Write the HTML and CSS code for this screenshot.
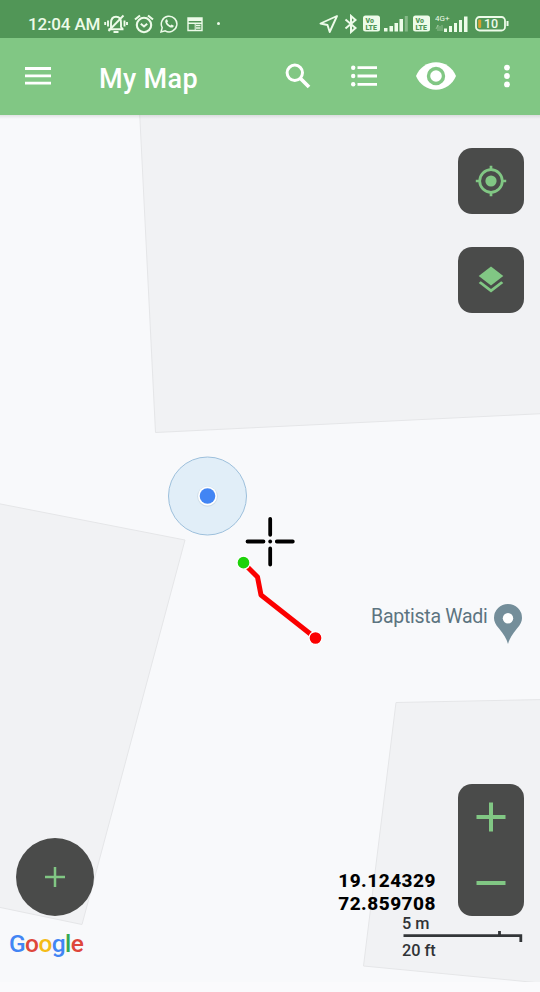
FILE: index.html
```html
<!DOCTYPE html>
<html lang="en">
<head>
<meta charset="utf-8">
<title>My Map</title>
<link rel="stylesheet" href="styles.css">
</head>
<body>
<div class="phone">
  <div class="status">
    <span class="clock">12:04 AM</span>
    <div class="status-left">
      <svg width="24" height="20" viewBox="0 0 24 20" fill="none" stroke="currentColor" stroke-width="1.900"><path d="M4.500 15.300h15M7 15V9c0-4 2-6.200 5-6.200s5 2.200 5 6.200v4l2 2.300M9.500 18h5M4 6.500v6M1.200 8v3M20.500 6.500v6M23 8v3"/><path d="M4.500 17 19.500 1.500"/></svg>
      <svg width="20" height="20" viewBox="0 0 20 20" fill="none" stroke="currentColor" stroke-width="2.100"><circle cx="10" cy="11" r="7.200"/><path d="m6.800 9.800 3.200 2.700 3.200-2.700M1 5.500 6 1.500M19 5.500l-5-4"/></svg>
      <svg width="18" height="20" viewBox="0 0 18 20" fill="none" stroke="currentColor" stroke-width="1.500"><path d="m1 18 1.200-4.300A7.800 7.800 0 1 1 5.200 16.800Z"/><path d="M5.600 6c.8-1 1.500-.9 1.900.2l.5 1.300-.8 1.100c.8 1.500 1.800 2.400 3.300 3l1-1.100 2 .9c.6.400.1 1.300-.5 1.800-1.200.9-3.200.3-5.400-1.500C5.400 9.700 4.700 7.300 5.600 6Z" fill="currentColor" stroke="none"/></svg>
      <svg class="news" width="16" height="16" viewBox="0 0 16 16" fill="none" stroke="currentColor" stroke-width="1.400"><path d="M1 2h14v12.500H1z"/><path d="M1 3.500h14" stroke-width="3"/><path d="M1 7.200h14M9 9.500h4.500M9 12h4.500" stroke-width="1.500"/><path d="M8.200 7v7.500" stroke-width="1"/></svg>
      <span class="dot"></span>
    </div>
    <div class="status-right">
      <svg class="nav" width="20" height="20" viewBox="0 0 20 20" fill="none" stroke="currentColor" stroke-width="1.900" stroke-linejoin="round"><path d="M18 2 1.500 9.500l7 1.500 2.200 7z"/></svg>
      <svg class="bt" width="14" height="20" viewBox="0 0 14 20" fill="none" stroke="currentColor" stroke-width="2"><path d="m1.500 5.500 10 8.500L7 18V2l4.500 4-10 8.500"/></svg>
      <svg class="volte" width="17" height="17" viewBox="0 0 17 17"><rect width="17" height="16" y=".5" rx="2.500" fill="currentColor"/><text x="2.500" y="7.800" class="lte">Vo</text><text x="2.500" y="14.500" class="lte">LTE</text></svg>
      <svg class="bars" width="25" height="17" viewBox="0 0 25 17" fill="currentColor"><path d="M0 13h3.500v3.500H0zM5.500 11H9v5.500H5.500zM10.500 8H14v8.500h-3.500zM15.500 4H19v12.500h-3.500z"/><path d="M20.800 1h3v15.500h-3z" opacity=".35"/></svg>
      <svg class="volte two" width="17" height="17" viewBox="0 0 17 17"><rect width="17" height="16" y=".5" rx="2.500" fill="currentColor"/><text x="2.500" y="7.800" class="lte">Vo</text><text x="2.500" y="14.500" class="lte">LTE</text></svg>
      <svg class="cell" width="34" height="19" viewBox="0 0 34 19" fill="currentColor"><text x="0" y="6.500" class="net">4G+</text><path d="m1 15 2-4v6M7 11v6M5 17v-5" fill="none" stroke="currentColor" stroke-width=".8" opacity=".5"/><path d="M9 14.500h3V18H9zM14 12h3v6h-3zM19 9h3v9h-3zM24 6h3v12h-3zM29 2.500h3.500V18H29z"/></svg>
      <svg class="battery" width="35" height="16" viewBox="0 0 35 16"><rect x="1" y="1" width="29" height="13.500" rx="3.500" fill="none" stroke="currentColor" stroke-width="1.800"/><path d="M31.500 5h2v5h-2z" fill="currentColor"/><rect x="3.200" y="3.500" width="3" height="8.500" rx="1" fill="#d9a02d"/><text x="9" y="12.200" class="charge">10</text></svg>
    </div>
  </div>
  <div class="appbar">
    <svg class="menu" width="26" height="20" viewBox="0 0 26 20"><path d="M0 2.500h26M0 9.800h26M0 17.200h26" stroke="currentColor" stroke-width="2.800"/></svg>
    <h1>My Map</h1>
    <svg class="search" width="26" height="26" viewBox="0 0 26 26" fill="none" stroke="currentColor" stroke-width="3"><circle cx="9.800" cy="9.800" r="7.700"/><path d="m15.500 15.500 8.500 8.500" stroke-width="3.700"/></svg>
    <svg class="list" width="26" height="22" viewBox="0 0 26 22" fill="currentColor"><circle cx="2.200" cy="2.700" r="2.200"/><circle cx="2.200" cy="11" r="2.200"/><circle cx="2.200" cy="19.300" r="2.200"/><path d="M6.500 1.300H26v2.800H6.500zM6.500 9.600H26v2.800H6.500zM6.500 17.900H26v2.800H6.500z"/></svg>
    <svg class="eye" width="40" height="28" viewBox="0 0 40 28"><path d="M0 14C3.500 5.500 11 .3 20 .3S36.500 5.500 40 14C36.500 22.500 29 27.700 20 27.700S3.500 22.500 0 14Z" fill="currentColor"/><circle cx="20" cy="14" r="7.500" fill="none" stroke="#81c784" stroke-width="3.400"/></svg>
    <svg class="more" width="6" height="24" viewBox="0 0 6 24" fill="currentColor"><circle cx="3" cy="3.600" r="2.900"/><circle cx="3" cy="12" r="2.900"/><circle cx="3" cy="20.400" r="2.900"/></svg>
  </div>
  <main class="map">
    <svg class="canvas" width="540" height="877" viewBox="0 115 540 877">
      <defs><linearGradient id="shade" x1="0" y1="0" x2="0" y2="1"><stop offset="0" stop-color="#000" stop-opacity=".09"/><stop offset="1" stop-color="#000" stop-opacity="0"/></linearGradient></defs>
      <g fill="#f1f2f4" stroke="#e5e6e8" stroke-width="1">
        <path d="M139.500 110 155.500 432.500 545 413.500V110z"/>
        <path d="M-2 503.500 185 540 82 924.500-2 907z"/>
        <path d="M396 702.500 545 699.500V983.500L515 980.500 363.500 966z"/>
      </g>
      <path d="M0 982h540v10H0z" fill="#fafafc"/>
      <path d="M0 115h540v4H0z" fill="url(#shade)"/>
      <circle cx="207.500" cy="496" r="39" fill="#e1eef8" stroke="#9dc0dc"/>
      <circle cx="207.500" cy="496.500" r="10.300" fill="#cfdde8"/>
      <circle cx="207.500" cy="496" r="9.500" fill="#fff"/>
      <circle cx="207.500" cy="496" r="7.800" fill="#4285f4"/>
      <path d="m243.500 563 14 14 3.500 18 54.500 43" fill="none" stroke="#fb0000" stroke-width="5" stroke-linejoin="round"/>
      <circle cx="243.500" cy="562.700" r="6.500" fill="#1ed20a" stroke="#fff" stroke-width="1.300"/>
      <circle cx="315.500" cy="638" r="6.500" fill="#fb0000" stroke="#fff" stroke-width="1.300"/>
      <g stroke="#fff" stroke-width="5.500" stroke-linecap="round"><path d="M270.200 519v16M270.200 549v15.500M247.500 541.800h16M277 541.800h16"/></g>
      <g stroke="#000" stroke-width="3.800" stroke-linecap="round"><path d="M270.200 518.800v16M270.200 548.500v16M247.500 541.500h16M276.800 541.500h16"/></g>
      <circle cx="270.200" cy="541.500" r="1.900"/>
      <path d="M508 644C506.500 638 503.500 634.500 499 628.500 495.500 624.500 494 621.500 494 618A14 14 0 0 1 522 618C522 621.500 520.500 624.500 517 628.500 512.500 634.500 509.500 638 508 644Z" fill="#748e9a"/>
      <circle cx="508" cy="618.300" r="5.200" fill="#fff"/>
      <path d="M403.500 935.700h117.300v6.300M499.500 931v5" fill="none" stroke="#333638" stroke-width="2.800"/>
    </svg>
    <span class="place">Baptista Wadi</span>
    <button class="tile locate" aria-label="Locate"><svg width="32" height="32" viewBox="0 0 32 32" fill="none" stroke="currentColor" stroke-width="2.700"><circle cx="16" cy="16" r="11.300"/><circle cx="16" cy="16" r="5.600" fill="currentColor" stroke="none"/><path d="M16 .8v4.500M16 26.700v4.500M.8 16h4.500M26.700 16h4.500"/></svg></button>
    <button class="tile layers" aria-label="Layers"><svg width="26" height="28" viewBox="0 0 26 28" fill="currentColor"><path d="M13 .5 25.300 10 13 19.500.7 10z"/><path d="m.7 16.900 2.100-1.700L13 23.100l10.200-7.900 2.100 1.700L13 26.500z"/></svg></button>
    <div class="zoom">
      <button aria-label="Zoom in"><svg width="30" height="30" viewBox="0 0 30 30"><path d="M.5 15h29M15 .5v29" stroke="currentColor" stroke-width="4"/></svg></button>
      <button aria-label="Zoom out"><svg width="30" height="30" viewBox="0 0 30 30"><path d="M.5 15h29" stroke="currentColor" stroke-width="4"/></svg></button>
    </div>
    <button class="add" aria-label="Add"><svg width="20" height="20" viewBox="0 0 20 20"><path d="M0 10h20M10 0v20" stroke="currentColor" stroke-width="2.500"/></svg></button>
    <div class="coords">19.124329<br>72.859708</div>
    <span class="scale meters">5 m</span>
    <span class="scale feet">20 ft</span>
    <div class="google"><span class="b">G</span><span class="r">o</span><span class="y">o</span><span class="b">g</span><span class="g">l</span><span class="r">e</span></div>
  </main>
</div>
</body>
</html>
```
FILE: styles.css
```css
* { box-sizing: border-box; }
body { margin: 0; font-family: Roboto, "Liberation Sans", sans-serif; }
svg { display: block; flex: none; }
button { border: 0; padding: 0; background: none; color: inherit; }
.phone { width: 540px; height: 992px; display: flex; flex-direction: column; overflow: hidden; }
.status { height: 38px; background: #519657; color: #edfbe9; display: flex; align-items: center; padding: 9px 30.5px 0 28px; }
.clock { font-size: 17px; line-height: 20px; font-weight: 500; width: 76px; letter-spacing: -0.15px; white-space: nowrap; }
.status-left { display: flex; align-items: center; gap: 6.2px; }
.news { margin-left: 2px; }
.dot { width: 3px; height: 3px; border-radius: 50%; background: currentColor; margin-left: 8.5px; }
.status-right { display: flex; align-items: center; margin-left: auto; }
.bt { margin-left: 5px; }
.volte { margin-left: 5px; }
.bars { margin-left: 4px; }
.volte.two { margin-left: 4px; }
.cell { margin-left: 5px; }
.battery { margin-left: 6px; }
.lte { font-size: 7px; font-weight: 900; fill: #519657; }
.net { font-size: 8px; }
.charge { font-size: 12.5px; font-weight: 500; fill: currentColor; }
.appbar { height: 77px; background: #81c784; color: #fff; display: flex; align-items: center; padding: 0 30px 1px 25px; }
.menu { margin-right: 48px; }
h1 { margin: 5px 0 0; width: 186px; font-size: 27px; line-height: 34px; font-weight: 500; letter-spacing: 0.35px; }
.list { margin-left: 40px; }
.eye { margin-left: 38.5px; }
.more { margin-left: auto; }
.map { position: relative; flex: 1; background: #f8f9fb; color: #81c784; }
.tile, .zoom, .add, .place, .coords, .scale, .google { position: absolute; }
.tile { right: 16.5px; width: 66px; height: 66px; border-radius: 14px; background: #4a4b4a; display: flex; align-items: center; justify-content: center; }
.locate { top: 33px; }
.layers { top: 132px; }
.zoom { right: 16.5px; top: 668.5px; width: 66px; height: 132px; border-radius: 14px; background: #4a4b4a; display: grid; grid-template-rows: 1fr 1fr; place-items: center; }
.add { left: 16px; top: 723px; width: 78px; height: 78px; border-radius: 50%; background: #4a4b4a; display: flex; align-items: center; justify-content: center; }
.place { left: 371px; top: 490px; font-size: 19.5px; line-height: 24px; letter-spacing: -0.27px; color: #5c7480; white-space: nowrap; }
.coords { right: 104px; top: 754px; font-size: 19px; line-height: 23px; font-weight: 800; color: #000; text-align: right; letter-spacing: 0.5px; }
.scale { left: 402px; font-size: 16.3px; line-height: 20px; font-weight: 500; color: #303336; }
.meters { top: 799px; }
.feet { top: 826px; }
.google { left: 9px; top: 814px; font-size: 24.5px; line-height: 30px; letter-spacing: -0.6px; font-weight: 500; white-space: nowrap; }
.b { color: #4285f4; }
.r { color: #de473b; }
.y { color: #f4bc18; }
.g { color: #34a853; }
```
